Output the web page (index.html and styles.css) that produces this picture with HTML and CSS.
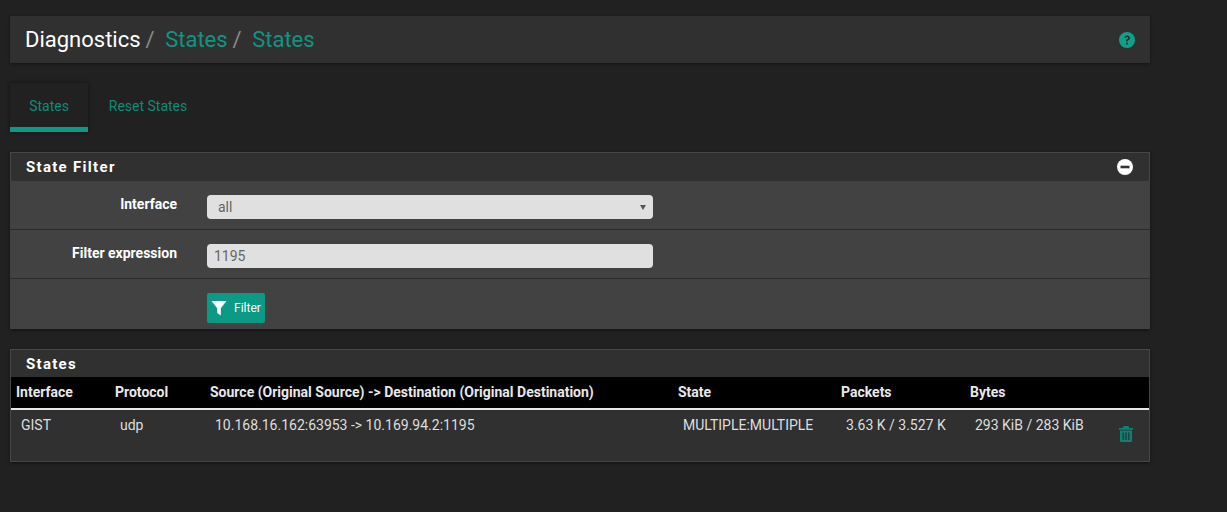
FILE: index.html
```html
<!DOCTYPE html>
<html lang="en">
<head>
<meta charset="utf-8">
<title>Diagnostics / States / States</title>
<link rel="stylesheet" href="styles.css">
</head>
<body>
<main class="page">
  <header class="crumbs">
    <h1 class="crumb-title"><span class="crumb-root">Diagnostics</span><span class="sep">/</span><a class="crumb-link">States</a><span class="sep">/</span><a class="crumb-link">States</a></h1>
    <svg class="help" viewBox="0 0 16 16" aria-hidden="true"><circle cx="8" cy="8" r="8" fill="#0fa08c"/><path d="M5.2 6.1C5.3 4.5 6.500 3.500 8.100 3.500c1.700 0 2.900 1 2.900 2.400 0 1.100-.6 1.700-1.400 2.200-.6.4-.8.6-.8 1.100v.3H7v-.5c0-1 .4-1.500 1.200-2 .6-.4.9-.6.9-1.100 0-.5-.4-.8-1-.8-.7 0-1.100.4-1.200 1zM7 10.700h1.900v1.900H7z" fill="#303030"/></svg>
  </header>

  <nav class="tabs">
    <a class="tab tab-active">States</a>
    <a class="tab">Reset States</a>
  </nav>

  <section class="panel">
    <div class="panel-heading">
      <h2 class="panel-title">State Filter</h2>
      <svg class="collapse" viewBox="0 0 16 16" aria-hidden="true"><circle cx="8" cy="8" r="8" fill="#fff"/><rect x="3.500" y="6.700" width="9" height="2.600" fill="#333"/></svg>
    </div>
    <div class="form-body">
      <div class="form-row">
        <label class="form-label">Interface</label>
        <div class="control control-select"><span>all</span><span class="caret"></span></div>
      </div>
      <div class="form-row">
        <label class="form-label">Filter expression</label>
        <div class="control"><span>1195</span></div>
      </div>
      <div class="form-row form-row-last">
        <span class="form-label"></span>
        <button class="btn" type="button">
          <svg class="btn-icon" viewBox="0 0 16 16" aria-hidden="true"><path d="M.5 1h15L9.800 8.300V15.500L6.200 13V8.300z" fill="#fff"/></svg>
          Filter
        </button>
      </div>
    </div>
  </section>

  <section class="panel panel-states">
    <div class="panel-heading panel-heading-states">
      <h2 class="panel-title">States</h2>
    </div>
    <table class="states">
      <colgroup>
        <col class="c1"><col class="c2"><col class="c3"><col class="c4"><col class="c5"><col class="c6"><col>
      </colgroup>
      <thead>
        <tr><th>Interface</th><th>Protocol</th><th>Source (Original Source) -&gt; Destination (Original Destination)</th><th>State</th><th>Packets</th><th>Bytes</th><th></th></tr>
      </thead>
      <tbody>
        <tr>
          <td>GIST</td><td>udp</td><td>10.168.16.162:63953 -&gt; 10.169.94.2:1195</td><td>MULTIPLE:MULTIPLE</td><td>3.63 K / 3.527 K</td><td>293 KiB / 283 KiB</td>
          <td class="actions"><svg class="trash" viewBox="0 0 14 16" aria-hidden="true"><path fill-rule="evenodd" d="M4.600 0h4.800l1 2H14v1.800H0V2h3.600zM1 4.600h12V15a1 1 0 0 1-1 1H2a1 1 0 0 1-1-1zM3.500 6.500v7.500h1.300V6.500zM6.350 6.500v7.500h1.300V6.500zM9.200 6.500v7.500h1.300V6.500z" fill="#0b8273"/></svg></td>
        </tr>
      </tbody>
    </table>
  </section>
</main>
</body>
</html>
```

FILE: styles.css
```css
* { box-sizing: border-box; }
html, body { margin: 0; height: 100%; }
body {
  background: #212121;
  color: #e0e0e0;
  font-family: Roboto, "Liberation Sans", sans-serif;
  font-size: 14px;
  overflow: hidden;
}
.page {
  width: 1140px;
  margin-left: 10px;
  padding-top: 16px;
}
.crumbs {
  height: 47px;
  background: #303030;
  box-shadow: 0 1px 3px rgba(0,0,0,.45);
  display: flex;
  align-items: center;
  justify-content: space-between;
  padding: 0 15px;
}
.crumb-title {
  margin: 0;
  font-size: 22px;
  font-weight: 400;
  line-height: 47px;
}
.crumb-root { color: #fff; }
.crumb-link { color: #0f9482; }
.sep { color: #8a8a8a; margin: 0 10.500px 0 5px; }
.help { width: 16px; height: 16px; }

.tabs {
  display: flex;
  margin-top: 20px;
  height: 49px;
}
.tab {
  color: #0f8a78;
  font-size: 14px;
  width: 78px;
  height: 49px;
  line-height: 46px;
  text-align: center;
}
.tab + .tab { width: 120px; }
.tab-active {
  background: #212121;
  border-bottom: 5px solid #0a9a86;
  box-shadow: 0 0 4px rgba(0,0,0,.45);
}

.panel {
  margin-top: 20px;
  background: #424242;
  box-shadow: 0 1px 3px rgba(0,0,0,.5);
}
.panel-heading {
  height: 29px;
  background: #303030;
  border: 1px solid #474747;
  border-bottom: 0;
  display: flex;
  align-items: center;
  justify-content: space-between;
  padding: 0 16px 0 15px;
}
.panel-title {
  margin: 0;
  color: #fff;
  font-size: 15px;
  font-weight: 700;
  letter-spacing: 1.300px;
}
.collapse { width: 16px; height: 16px; }

.form-row {
  height: 49px;
  display: flex;
  border-top: 1px solid #2a2a2a;
  padding-top: 14px;
}
.form-body .form-row:first-child { border-top: 0; padding-top: 14px; height: 48px; }
.form-row-last { height: 51px; padding-top: 14px; }
.form-label {
  width: 167px;
  color: #fff;
  font-size: 14px;
  font-weight: 700;
  text-align: right;
  line-height: 18px;
}
.control {
  margin-left: 30px;
  width: 446px;
  height: 24px;
  background: #e0e0e0;
  color: #666;
  border-radius: 4px;
  font-size: 14px;
  line-height: 24px;
  padding: 0 7px;
  position: relative;
}
.control-select { padding-left: 11px; }
.caret {
  position: absolute;
  right: 7px;
  top: 10px;
  border-left: 3.500px solid transparent;
  border-right: 3.500px solid transparent;
  border-top: 5px solid #555;
}
.btn {
  margin-left: 30px;
  width: 58px;
  height: 30px;
  background: #0a9a86;
  color: #fff;
  border: 0;
  border-radius: 2px;
  font-family: inherit;
  font-size: 12px;
  padding: 0 0 0 4px;
  display: flex;
  align-items: center;
  gap: 7px;
}
.btn-icon { width: 16px; height: 16px; flex: none; }

.panel-states { background: #303030; border: 1px solid #474747; border-top: 0; }
.panel-heading-states { height: 28px; border-left: 0; border-right: 0; border-top: 1px solid #474747; padding-left: 15px; }
.states {
  width: 100%;
  border-collapse: collapse;
  table-layout: fixed;
}
.c1 { width: 99px; }
.c2 { width: 95px; }
.c3 { width: 468px; }
.c4 { width: 163px; }
.c5 { width: 129px; }
.c6 { width: 146px; }
.states th {
  background: #000;
  color: #e8e8e8;
  font-size: 14px;
  font-weight: 700;
  text-align: left;
  height: 32px;
  padding: 0 0 2px 5px;
  border-bottom: 2px solid #e8e8e8;
  white-space: nowrap;
}
.states td {
  height: 52px;
  padding: 7px 0 0 10px;
  font-size: 14px;
  color: #dedede;
  vertical-align: top;
  white-space: nowrap;
}
.states td.actions { padding: 16px 0 0 8px; }
.trash { width: 14px; height: 16px; display: block; }
```
